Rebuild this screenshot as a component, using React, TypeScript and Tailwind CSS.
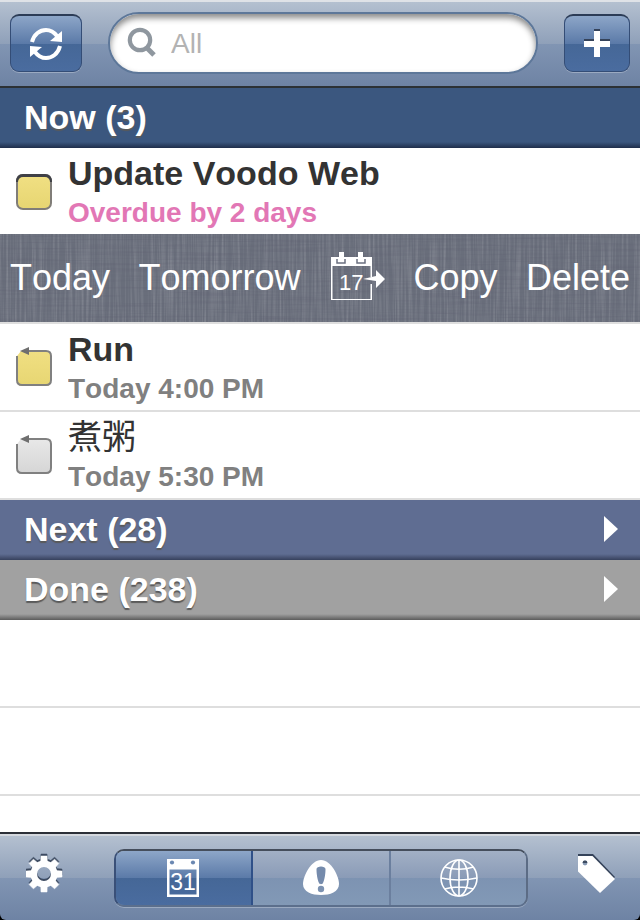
import { useState } from "react";
import type { ReactNode } from "react";
import clsx from "clsx";

interface Task {
  id: number;
  title: string;
  due: string;
  overdue?: boolean;
  repeats?: boolean;
  starred?: boolean;
  cjk?: boolean;
}

const tasks: Task[] = [
  { id: 1, title: "Update Voodo Web", due: "Overdue by 2 days", overdue: true, starred: true },
  { id: 2, title: "Run", due: "Today 4:00 PM", repeats: true, starred: true },
  { id: 3, title: "煮粥", due: "Today 5:30 PM", repeats: true, cjk: true },
];

const barGradient =
  "bg-[linear-gradient(to_bottom,#b4c0d0_0%,#8fa0b9_50%,#8195b3_50%,#6e83a4_100%)]";
const blueGradient =
  "bg-[linear-gradient(to_bottom,#8da6c8_0%,#5b7aa8_50%,#456797_50%,#4a6c9f_100%)]";

function SyncIcon() {
  return (
    <svg width="34" height="34" viewBox="0 0 34 34" aria-hidden="true">
      <g fill="none" stroke="#fff" strokeWidth="4">
        <path d="M3 15C5 7 11 3 17 3c5 0 8 2 11 6" />
        <path d="M31 19c-2 8-8 12-14 12-5 0-8-2-11-6" />
      </g>
      <path d="M33 4v11l-12-1z M1 30V19l12 1z" fill="#fff" />
    </svg>
  );
}

function PlusIcon() {
  return (
    <svg width="28" height="30" viewBox="0 0 28 30" aria-hidden="true">
      <path d="M11 0h6v10h10v6H17v10h-6V16H1v-6h10z" fill="#35435a" />
      <path d="M11 2h6v10h10v6H17v10h-6V18H1v-6h10z" fill="#fff" />
    </svg>
  );
}

function SearchIcon() {
  return (
    <svg width="30" height="32" viewBox="0 0 30 32" aria-hidden="true">
      <circle cx="14" cy="13" r="10.2" fill="none" stroke="#8f979f" strokeWidth="4.2" />
      <path d="M20 20l8 8" stroke="#8f979f" strokeWidth="5" />
    </svg>
  );
}

function RescheduleIcon() {
  return (
    <svg width="56" height="52" viewBox="0 0 56 52" aria-hidden="true">
      <path d="M2 5h41v20h-1.500V14h-38v33h38V32H43v16H2z" fill="#fff" />
      <path d="M10 0h5v7h-5z M29 0h5v7h-5z" fill="#fff" />
      <path d="M8 7v4h8V7 M28 7v4h8V7" fill="none" stroke="#6b7080" strokeWidth="1.500" />
      <text x="10" y="38" fontSize="22" fill="#fff" fontFamily="Liberation Sans, sans-serif">
        17
      </text>
      <path d="M34 27l13-3v-6l9 9-9 9v-7z" fill="#fff" />
    </svg>
  );
}

function CalendarIcon() {
  return (
    <svg width="34" height="40" viewBox="0 0 34 40" aria-hidden="true">
      <path
        fillRule="evenodd"
        d="M0 1h32v38H0z M2.500 11.500v25h27v-25z"
        fill="#fff"
      />
      <circle cx="5" cy="4.500" r="2.100" fill="#6b88b2" />
      <circle cx="26" cy="4.500" r="2.100" fill="#6b88b2" />
      <text x="16" y="32" fontSize="23" textAnchor="middle" fill="#fff" fontFamily="Liberation Sans, sans-serif">
        31
      </text>
    </svg>
  );
}

function AlertIcon() {
  return (
    <svg width="36" height="38" viewBox="0 0 36 38" aria-hidden="true">
      <path
        d="M18 1C28 1 36 17 36 25c0 8-9 11-18 11S0 33 0 25C0 17 8 1 18 1z"
        fill="#fff"
      />
      <path d="M13.500 10c0-3.500 9-3.500 9 0 0 5-1 11-2.500 14-.8 1.600-3.200 1.600-4 0-1.500-3-2.500-9-2.500-14z" fill="#758bac" />
      <circle cx="18" cy="30" r="3.200" fill="#7c92b1" />
    </svg>
  );
}

function GlobeIcon() {
  return (
    <svg width="40" height="40" viewBox="0 0 40 40" aria-hidden="true">
      <g fill="none" stroke="#fff" strokeWidth="1.600">
        <circle cx="21" cy="20" r="18" />
        <path d="M21 2v36 M3 20q18 4 36 0 M6.500 9q14.500 4.500 29 0 M6.500 31q14.500-4 29 0" />
        <ellipse cx="21" cy="20" rx="9" ry="18" />
      </g>
    </svg>
  );
}

const teeth = [0, 45, 90, 135, 180, 225, 270, 315];

function GearShape({ y, color }: { y: number; color: string }) {
  return (
    <g transform={`translate(18 ${y})`} fill={color} stroke={color}>
      <circle r="10.2" fill="none" strokeWidth="6.500" />
      {teeth.map((angle) => (
        <path key={angle} d="M-3.400-12l.4-6h6l.4 6z" transform={`rotate(${angle})`} strokeWidth="0.500" />
      ))}
    </g>
  );
}

function GearIcon() {
  return (
    <svg width="38" height="40" viewBox="0 0 38 40" aria-hidden="true">
      <GearShape y={19} color="#3d4b61" />
      <GearShape y={21} color="#fff" />
    </svg>
  );
}

function TagIcon() {
  return (
    <svg width="36" height="40" viewBox="0 0 36 40" className="overflow-visible" aria-hidden="true">
      <path d="M0 0h15l22 23-15 15L0 16z" fill="#35435a" />
      <path d="M0 2h14.500L37 25 22 39 0 17.500z" fill="#fff" />
      <circle cx="7" cy="9" r="2.400" fill="#8799b4" />
      <path d="M4.600 9a2.400 2.400 0 0 1 4.800 0z" fill="#3d4b61" />
    </svg>
  );
}

function CheckBox({ task }: { task: Task }) {
  const fill = task.starred ? "url(#box-yellow)" : "url(#box-gray)";

  return (
    <div className="relative mt-5 h-[40px] w-[36px] shrink-0">
      <input
        id={`task-${task.id}`}
        type="checkbox"
        className="absolute inset-0 h-full w-full appearance-none"
      />
      <svg width="36" height="40" viewBox="0 0 36 40" className="pointer-events-none absolute inset-0" aria-hidden="true">
        <defs>
          <linearGradient id="box-yellow" x1="0" y1="0" x2="0" y2="1">
            <stop offset="0" stopColor="#f0df82" />
            <stop offset="1" stopColor="#e7d672" />
          </linearGradient>
          <linearGradient id="box-gray" x1="0" y1="0" x2="0" y2="1">
            <stop offset="0" stopColor="#e8e8e8" />
            <stop offset="1" stopColor="#d5d5d5" />
          </linearGradient>
        </defs>
        {task.repeats ? (
          <>
            <path d="M5 4h25q5 0 5 5v25q0 5-5 5H6q-5 0-5-5V9z" fill={fill} />
            <path d="M12 4h18q5 0 5 5v24q0 5-5 5H6q-5 0-5-5V9" fill="none" stroke="#808080" strokeWidth="2" />
            <path d="M4 4l9-4v8z" fill="#6f6f6f" />
          </>
        ) : (
          <>
            <rect x="0" y="3" width="36" height="36" rx="7" fill="#807d78" />
            <path d="M0 11q0-8 7-8h22q7 0 7 8z" fill="#3f4046" />
            <rect x="2" y="6" width="32" height="31" rx="5" fill={fill} />
          </>
        )}
      </svg>
    </div>
  );
}

function TaskRow({ task, last }: { task: Task; last?: boolean }) {
  return (
    <li className={clsx("flex gap-4 border-[#dedede] bg-white px-4 pt-[3px] pb-[3px]", last ? "" : "border-b-2")}>
      <CheckBox task={task} />
      <label htmlFor={`task-${task.id}`} className="min-w-0 flex-1">
        <span
          className={clsx(
            "block truncate text-[34px] leading-[44px] text-[#333]",
            task.cjk ? "font-normal" : "font-bold"
          )}
        >
          {task.title}
        </span>
        <span
          className={clsx(
            "block truncate text-[28px] leading-[36px] font-bold",
            task.overdue ? "text-[#e277b5]" : "text-[#808080]"
          )}
        >
          {task.due}
        </span>
      </label>
    </li>
  );
}

function ActionBar() {
  return (
    <div className="relative border-b-2 border-[#dedede] bg-[#696e7b]">
      {/* Linen texture */}
      <svg className="absolute inset-0 h-full w-full" aria-hidden="true">
        <filter id="linen-v" x="0" y="0" width="100%" height="100%">
          <feTurbulence type="fractalNoise" baseFrequency="0.45 0.012" numOctaves="3" seed="4" />
          <feColorMatrix values="0 0 0 0 1  0 0 0 0 1  0 0 0 0 1  0.35 0 0 0 -0.14" />
        </filter>
        <filter id="linen-h" x="0" y="0" width="100%" height="100%">
          <feTurbulence type="fractalNoise" baseFrequency="0.012 0.45" numOctaves="3" seed="9" />
          <feColorMatrix values="0 0 0 0 0.1  0 0 0 0 0.1  0 0 0 0 0.15  0.6 0 0 0 -0.25" />
        </filter>
        <rect width="100%" height="100%" filter="url(#linen-v)" />
        <rect width="100%" height="100%" filter="url(#linen-h)" />
      </svg>
      <div className="relative flex h-[88px] items-center justify-between px-[10px] text-[36px] text-white">
        <button>Today</button>
        <button>Tomorrow</button>
        <button aria-label="Reschedule">
          <RescheduleIcon />
        </button>
        <button>Copy</button>
        <button>Delete</button>
      </div>
    </div>
  );
}

interface SectionProps {
  label: string;
  className: string;
  collapsed?: boolean;
}

function SectionHeader({ label, className, collapsed }: SectionProps) {
  return (
    <button
      className={clsx(
        "flex h-[60px] w-full items-center justify-between pr-[22px] pb-[2px] pl-6 text-[34px] font-bold text-white",
        className
      )}
    >
      <span className="[text-shadow:0_2px_1px_#5a5a5a]">{label}</span>
      {collapsed && (
        <svg width="14" height="26" viewBox="0 0 14 26" aria-hidden="true">
          <path d="M0 0l14 13L0 26z" fill="#fff" />
        </svg>
      )}
    </button>
  );
}

function ToolButton({ label, className, children }: { label: string; className: string; children: ReactNode }) {
  return (
    <button
      aria-label={label}
      className={clsx(
        "flex h-[58px] items-center justify-center rounded-[9px] border border-t-2 border-[#344d76] border-t-[#2c3c56] shadow-[0_1px_0_#9baac1]",
        blueGradient,
        className
      )}
    >
      {children}
    </button>
  );
}

const tabs = [
  { name: "Calendar", icon: <CalendarIcon /> },
  { name: "Priority", icon: <AlertIcon /> },
  { name: "All lists", icon: <GlobeIcon /> },
];

export default function App() {
  const [active, setActive] = useState("Calendar");

  return (
    <div className="flex min-h-screen flex-col bg-white font-['Liberation_Sans','Noto_Sans_CJK_SC',sans-serif] [font-kerning:none]">
      <header
        className={clsx(
          "flex h-[88px] items-center gap-[26px] border-t-2 border-b-2 border-t-[#dfe2e7] border-b-[#2c3135] px-[10px] pb-[2px]",
          barGradient
        )}
      >
        <ToolButton label="Sync" className="w-[72px]">
          <SyncIcon />
        </ToolButton>
        <div className="flex h-[62px] min-w-0 flex-1 items-center gap-[15px] rounded-full border-2 border-[#5d7799] bg-white px-[16px] shadow-[inset_0_4px_6px_#8a8a8a]">
          <SearchIcon />
          <input
            type="text"
            aria-label="Search"
            placeholder="All"
            className="min-w-0 flex-1 bg-transparent pt-[2px] text-[28px] outline-none placeholder:text-[#b3b3b3]"
          />
        </div>
        <ToolButton label="Add task" className="w-[66px]">
          <PlusIcon />
        </ToolButton>
      </header>

      <main className="flex flex-1 flex-col">
        <SectionHeader label="Now (3)" className="bg-[linear-gradient(to_bottom,#3b577f_54px,#1f2e4b_60px)]" />
        <ul>
          <TaskRow task={tasks[0]} last />
        </ul>
        <ActionBar />
        <ul>
          <TaskRow task={tasks[1]} />
          <TaskRow task={tasks[2]} />
        </ul>
        <SectionHeader
          label="Next (28)"
          collapsed
          className="bg-[linear-gradient(to_bottom,#5f6d92_54px,#37415d_60px)]"
        />
        <SectionHeader
          label="Done (238)"
          collapsed
          className="bg-[linear-gradient(to_bottom,#a1a1a1_54px,#5c5c5c_60px)]"
        />
        {/* Blank rows */}
        <div className="flex-1">
          <div className="h-[88px] border-b-2 border-[#dedede]" />
          <div className="h-[88px] border-b-2 border-[#dedede]" />
        </div>
      </main>

      <footer className="border-t-2 border-[#2c3038] bg-black">
        <div
          className={clsx(
            "flex h-[86px] items-center gap-[50px] rounded-b-[6px] border-t-2 border-[#d5d9df] px-[26px]",
            barGradient
          )}
        >
          <button aria-label="Settings" className="pb-[10px]">
            <GearIcon />
          </button>
          <nav className="flex h-[58px] flex-1 overflow-hidden rounded-[10px] border-2 border-r-[#5c6c85] border-b-[#5c6f8c] border-t-[#454e5c] border-l-[#3a5078] shadow-[0_1px_0_#9baac1]">
            {tabs.map((tab) => (
              <button
                key={tab.name}
                aria-label={tab.name}
                aria-pressed={active === tab.name}
                onClick={() => setActive(tab.name)}
                className={clsx(
                  "flex flex-1 items-center justify-center border-r-2 last:border-r-0",
                  active === tab.name
                    ? "border-[#2f5088] bg-[linear-gradient(to_bottom,#8da6c8_0%,#5b7aa8_50%,#456797_50%,#4a6c9f_100%)]"
                    : "border-[#6b7f9e] bg-[linear-gradient(to_bottom,#a2b0c5_0%,#8a9bb7_50%,#7d93b2_50%,#8299b6_100%)]"
                )}
              >
                {tab.icon}
              </button>
            ))}
          </nav>
          <button aria-label="Tags" className="pb-[8px]">
            <TagIcon />
          </button>
        </div>
      </footer>
    </div>
  );
}
